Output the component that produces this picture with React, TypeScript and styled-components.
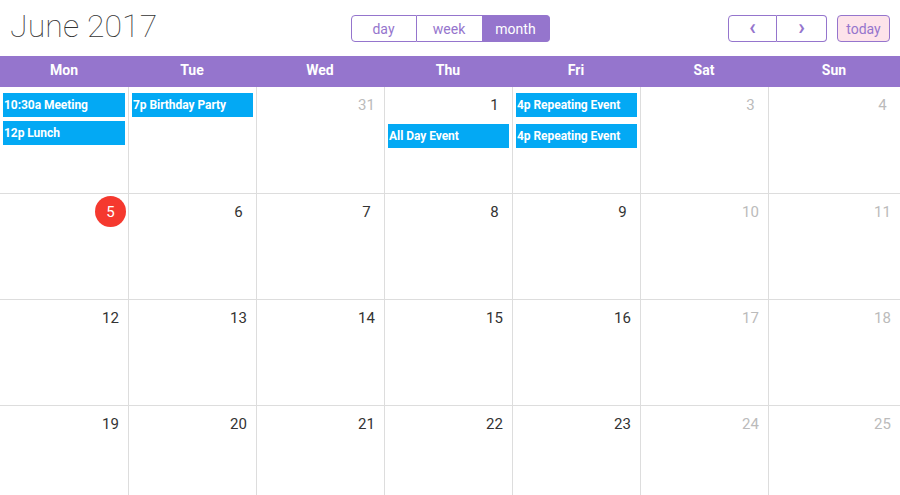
import styled, { createGlobalStyle } from "styled-components";

const PURPLE = "#9575cd";
const LINE = "#dddddd";

interface EventData {
  time?: string;
  title: string;
  gap?: number;
}

interface DayData {
  num?: number;
  muted?: boolean;
  today?: boolean;
  events?: EventData[];
}

const weeks: DayData[][] = [
  [
    {
      events: [
        { time: "10:30a", title: "Meeting" },
        { time: "12p", title: "Lunch", gap: 4 },
      ],
    },
    { events: [{ time: "7p", title: "Birthday Party" }] },
    { num: 31, muted: true },
    { num: 1, events: [{ title: "All Day Event", gap: 6 }] },
    {
      events: [
        { time: "4p", title: "Repeating Event" },
        { time: "4p", title: "Repeating Event", gap: 7 },
      ],
    },
    { num: 3, muted: true },
    { num: 4, muted: true },
  ],
  [
    { num: 5, today: true },
    { num: 6 },
    { num: 7 },
    { num: 8 },
    { num: 9 },
    { num: 10, muted: true },
    { num: 11, muted: true },
  ],
  [
    { num: 12 },
    { num: 13 },
    { num: 14 },
    { num: 15 },
    { num: 16 },
    { num: 17, muted: true },
    { num: 18, muted: true },
  ],
  [
    { num: 19 },
    { num: 20 },
    { num: 21 },
    { num: 22 },
    { num: 23 },
    { num: 24, muted: true },
    { num: 25, muted: true },
  ],
];

const dayNames = ["Mon", "Tue", "Wed", "Thu", "Fri", "Sat", "Sun"];

function App() {
  return (
    <>
      <GlobalStyle />
      <Page>
        <Toolbar>
          <Title>June 2017</Title>
          <ButtonGroup>
            <GroupButton>day</GroupButton>
            <GroupButton>week</GroupButton>
            <GroupButton $active>month</GroupButton>
          </ButtonGroup>
          <RightSide>
            <ButtonGroup>
              <NavButton>‹</NavButton>
              <NavButton>›</NavButton>
            </ButtonGroup>
            <TodayButton>today</TodayButton>
          </RightSide>
        </Toolbar>

        <HeadRow>
          {dayNames.map((d) => (
            <HeadCell key={d}>{d}</HeadCell>
          ))}
        </HeadRow>

        {weeks.map((week, wi) => (
          <WeekRow key={wi} $first={wi === 0}>
            {week.map((day, di) => (
              <Cell key={di}>
                {day.num !== undefined && (
                  <NumberRow>
                    <DayNumber $muted={day.muted} $today={day.today}>
                      {day.num}
                    </DayNumber>
                  </NumberRow>
                )}
                {day.events?.map((ev, ei) => (
                  <Event key={ei} $gap={ev.gap ?? 0}>
                    {ev.time && <span>{ev.time} </span>}
                    {ev.title}
                  </Event>
                ))}
              </Cell>
            ))}
          </WeekRow>
        ))}
      </Page>
    </>
  );
}
export default App;

const GlobalStyle = createGlobalStyle`
  html, body {
    margin: 0;
    padding: 0;
    background: #ffffff;
    overflow: hidden;
  }
  body {
    font-family: Roboto, "Liberation Sans", sans-serif;
  }
`;

const Page = styled.div`
  width: 900px;
  height: 495px;
  overflow: hidden;
  background: #fff;
`;

const Toolbar = styled.div`
  display: grid;
  grid-template-columns: 1fr auto 1fr;
  align-items: center;
  height: 56px;
  padding: 0 10px 0 10px;
  box-sizing: border-box;
`;

const Title = styled.h2`
  margin: 0;
  margin-top: -4px;
  font-size: 32px;
  font-weight: 100;
  color: #333;
  letter-spacing: 0.1px;
`;

const ButtonGroup = styled.div`
  display: flex;
  margin-top: 1px;
`;

const GroupButton = styled.button<{ $active?: boolean }>`
  width: 66px;
  height: 27px;
  padding: 0;
  font-family: Roboto, "Liberation Sans", sans-serif;
  font-size: 14px;
  color: ${(p) => (p.$active ? "#fff" : PURPLE)};
  background: ${(p) => (p.$active ? PURPLE : "#fff")};
  border: 1px solid ${PURPLE};
  border-left-width: 0;
  &:first-child {
    border-left-width: 1px;
    border-radius: 4px 0 0 4px;
  }
  &:last-child {
    border-radius: 0 4px 4px 0;
    width: 67px;
  }
`;

const RightSide = styled.div`
  display: flex;
  justify-content: flex-end;
  gap: 10px;
`;

const NavButton = styled(GroupButton)`
  width: 49px;
  font-size: 22px;
  font-weight: 700;
  line-height: 22px;
  padding-bottom: 3px;
  &:last-child {
    width: 50px;
  }
`;

const TodayButton = styled.button`
  width: 53px;
  height: 27px;
  margin-top: 1px;
  padding: 0;
  font-family: Roboto, "Liberation Sans", sans-serif;
  font-size: 14px;
  color: ${PURPLE};
  background: #fde3ea;
  border: 1px solid ${PURPLE};
  border-radius: 4px;
`;

const HeadRow = styled.div`
  display: grid;
  grid-template-columns: repeat(6, 128px) 1fr;
  height: 31px;
  background: ${PURPLE};
`;

const HeadCell = styled.div`
  display: flex;
  align-items: center;
  justify-content: center;
  color: #fff;
  font-size: 14px;
  font-weight: 700;
  padding-bottom: 3px;
`;

const WeekRow = styled.div<{ $first?: boolean }>`
  display: grid;
  grid-template-columns: repeat(6, 128px) 1fr;
  box-sizing: border-box;
  height: ${(p) => (p.$first ? 107 : 106)}px;
  border-bottom: 1px solid ${LINE};
`;

const Cell = styled.div`
  display: flex;
  flex-direction: column;
  padding-top: 6px;
  min-width: 0;
  & + & {
    border-left: 1px solid ${LINE};
  }
`;

const NumberRow = styled.div`
  display: flex;
  justify-content: flex-end;
  align-items: center;
  height: 25px;
  padding-right: 2px;
`;

const DayNumber = styled.span<{ $muted?: boolean; $today?: boolean }>`
  display: flex;
  align-items: center;
  justify-content: center;
  width: 31px;
  height: 31px;
  margin-top: -2px;
  border-radius: 50%;
  font-size: 15px;
  background: ${(p) => (p.$today ? "#f5392f" : "transparent")};
  color: ${(p) => (p.$today ? "#fff" : p.$muted ? "#bbbbbb" : "#333333")};
`;

const Event = styled.div<{ $gap: number }>`
  margin: ${(p) => p.$gap}px 3px 0 3px;
  height: 24px;
  line-height: 24px;
  padding: 0 1px;
  background: #03a9f4;
  color: #fff;
  font-size: 12px;
  font-weight: 700;
  letter-spacing: -0.05px;
  white-space: nowrap;
  overflow: hidden;
`;
